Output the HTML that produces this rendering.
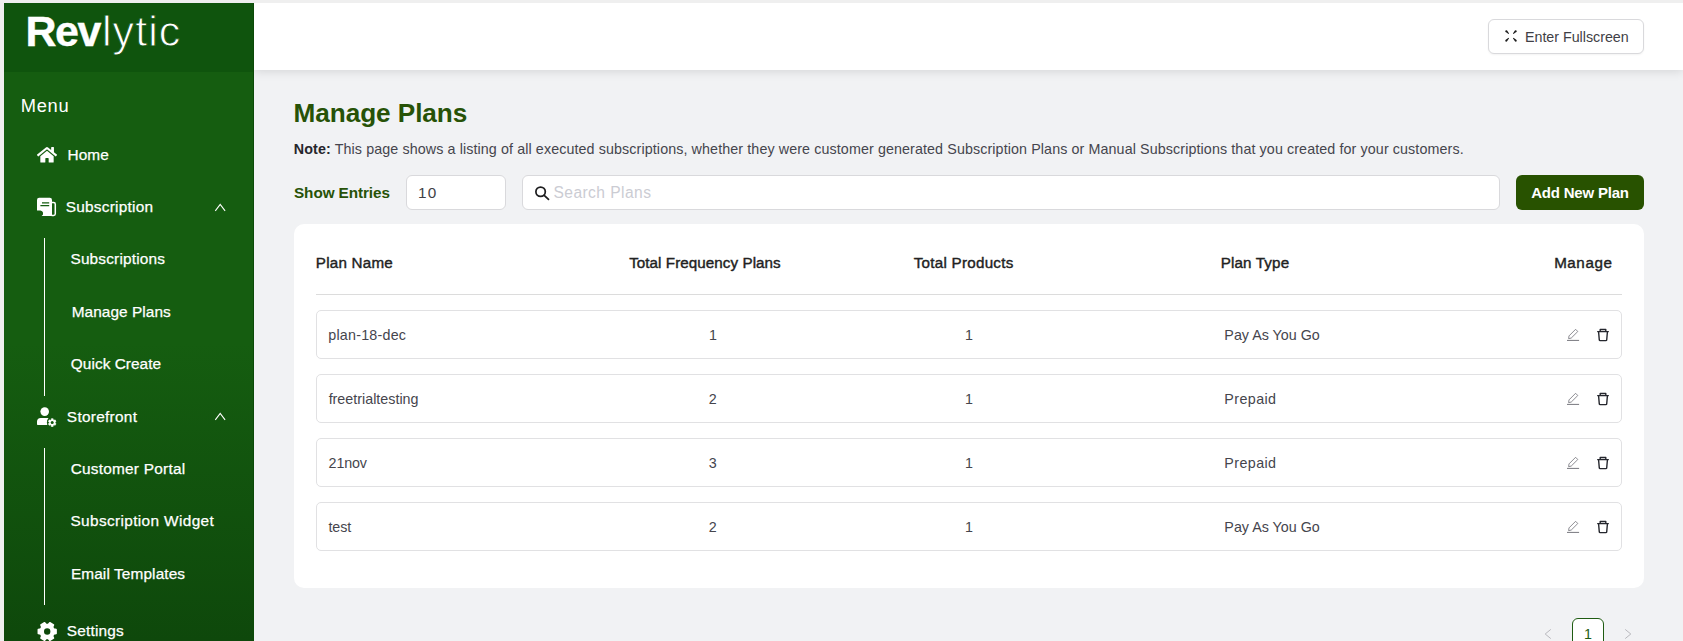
<!DOCTYPE html>
<html lang="en">
<head>
<meta charset="utf-8">
<title>Manage Plans</title>
<style>
*{box-sizing:border-box;margin:0;padding:0}
html,body{width:1683px;height:641px;overflow:hidden;background:#f1f2f4;font-family:"Liberation Sans",sans-serif;color:#333}
.abs{position:absolute}
.t{position:absolute;white-space:nowrap;line-height:1.2}
.t b{font-weight:700;color:#26262c}
#frameTop{left:0;top:0;width:1683px;height:3px;background:#efefef}
#frameLeft{left:0;top:0;width:4px;height:641px;background:#efefef}
#sidebar{left:4px;top:3px;width:250px;height:638px;background:linear-gradient(180deg,#155d10 0px,#155d10 340px,#0e480b 638px);border-right:1px solid #0b4a08}
#logo{left:4px;top:3px;width:250px;height:68.5px;background:#0f540d;border-right:1px solid #0b4a08}
.vline{position:absolute;width:1px;background:#fff;left:44px}
#header{left:254px;top:3px;width:1429px;height:67px;background:#fff;box-shadow:0 1px 10px rgba(0,0,0,.13)}
#fs{left:1488px;top:19px;width:156px;height:35px;border:1px solid #d9d9dc;border-radius:6px;background:#fff;box-shadow:0 1px 2px rgba(0,0,0,.05)}
.inp{position:absolute;top:175px;height:35px;background:#fff;border:1px solid #d9d9dc;border-radius:6px}
#add{left:1516px;top:175px;width:128px;height:35px;background:#285200;border-radius:6px}
#card{left:294px;top:224px;width:1350px;height:364px;background:#fff;border-radius:10px}
#div{left:316px;top:294px;width:1306px;height:1px;background:#dcdcdc}
.row{position:absolute;left:316px;width:1306px;height:49px;border:1px solid #e1e1e3;border-radius:5px;background:#fff}
#pg{left:1572px;top:617.5px;width:32px;height:32px;border:1px solid #1f5c12;border-radius:6px;background:#fff}
</style>
</head>
<body>
<div class="abs" id="header"></div>
<div class="abs" id="frameTop"></div>
<div class="abs" id="frameLeft"></div>
<div class="abs" id="fs"></div>
<div class="abs" id="sidebar"></div>
<div class="abs" id="logo"></div>
<div class="vline" style="top:238px;height:158px"></div>
<div class="vline" style="top:448px;height:157px"></div>
<div class="inp" style="left:406px;width:100px"></div>
<div class="inp" style="left:522px;width:978px"></div>
<div class="abs" id="add"></div>
<div class="abs" id="card"></div>
<div class="abs" id="div"></div>
<div class="row" style="top:310px"></div>
<div class="row" style="top:374px"></div>
<div class="row" style="top:438px"></div>
<div class="row" style="top:502px"></div>
<div class="abs" id="pg"></div>
<svg class="abs" style="left:0;top:0" width="1683" height="641" viewBox="0 0 1683 641">
<g transform="translate(37,145.89) scale(0.03472)" fill="#fff"><path d="M280.37 148.26L96 300.11V464a16 16 0 0 0 16 16l112.06-.29a16 16 0 0 0 15.92-16V368a16 16 0 0 1 16-16h64a16 16 0 0 1 16 16v95.64a16 16 0 0 0 16 16.05L464 480a16 16 0 0 0 16-16V300L295.67 148.26a12.19 12.19 0 0 0-15.3 0zM571.6 251.47L488 182.56V44.05a12 12 0 0 0-12-12h-56a12 12 0 0 0-12 12v72.61L318.47 43a48 48 0 0 0-61 0L4.34 251.47a12 12 0 0 0-1.6 16.9l25.5 31A12 12 0 0 0 45.15 301l235.22-193.74a12.19 12.19 0 0 1 15.3 0L530.9 301a12 12 0 0 0 16.9-1.6l25.5-31a12 12 0 0 0-1.7-16.93z"/></g>
<path fill="#fff" d="M39.2 197.8h10.6a2.2 2.2 0 0 1 2.2 2.2v16.1h-10.4a3 3 0 0 0 -1.2 -5.6h-3.4v-10.5a2.2 2.2 0 0 1 2.2 -2.2z"/>
<path stroke="#155d10" stroke-width="1.2" d="M42 202.8h7.2M40.4 205.6h8.8" fill="none"/>
<path fill="none" stroke="#fff" stroke-width="1.5" d="M52 202.6h1.6a1.7 1.7 0 0 1 1.7 1.7v9.4a1.7 1.7 0 0 1 -1.7 1.7h-2"/>
<path fill="none" stroke="#fff" stroke-width="1.1" d="M215.3 210.9L220.2 204.5L225.1 210.9"/>
<path fill="none" stroke="#fff" stroke-width="1.1" d="M215.3 419.9L220.2 413.5L225.1 419.9"/>
<circle cx="44.7" cy="411.6" r="4.3" fill="#fff"/>
<path fill="#fff" d="M40.8 417.9h7.8a4.9 4.9 0 0 0 -1.3 4.7a4.9 4.9 0 0 0 0.6 2.4h-10.1a0.8 0.8 0 0 1 -0.8 -0.8v-2.5a3.8 3.8 0 0 1 3.8 -3.8z"/>
<circle cx="52.2" cy="422.6" r="5.3" fill="#13580f"/>
<path fill="#fff" stroke="#fff" stroke-width="0.6" stroke-linejoin="round" d="M53.22 425.31 L53.11 426.49 L51.29 426.49 L51.18 425.31 L50.36 424.84 L49.28 425.34 L48.37 423.76 L49.34 423.07 L49.34 422.13 L48.37 421.44 L49.28 419.86 L50.36 420.36 L51.18 419.89 L51.29 418.71 L53.11 418.71 L53.22 419.89 L54.04 420.36 L55.12 419.86 L56.03 421.44 L55.06 422.13 L55.06 423.07 L56.03 423.76 L55.12 425.34 L54.04 424.84Z"/>
<circle cx="52.2" cy="422.6" r="1.5" fill="#13580f"/>
<path fill="#fff" stroke="#fff" stroke-width="1.6" stroke-linejoin="round" d="M53.75 629.03 L56.06 629.42 L56.06 633.58 L53.75 633.97 L52.61 635.94 L53.43 638.13 L49.83 640.21 L48.34 638.41 L46.06 638.41 L44.57 640.21 L40.97 638.13 L41.79 635.94 L40.65 633.97 L38.34 633.58 L38.34 629.42 L40.65 629.03 L41.79 627.06 L40.97 624.87 L44.57 622.79 L46.06 624.59 L48.34 624.59 L49.83 622.79 L53.43 624.87 L52.61 627.06Z"/>
<circle cx="47.2" cy="631.5" r="3.2" fill="#0e490c"/>
<path transform="translate(1511.0,35.9) rotate(45)" fill="#1b1b1b" d="M3.1 -0.38L6.0 -0.95A1.1 1.1 0 1 1 6.0 0.95L3.1 0.38Z"/>
<path transform="translate(1511.0,35.9) rotate(135)" fill="#1b1b1b" d="M3.1 -0.38L6.0 -0.95A1.1 1.1 0 1 1 6.0 0.95L3.1 0.38Z"/>
<path transform="translate(1511.0,35.9) rotate(225)" fill="#1b1b1b" d="M3.1 -0.38L6.0 -0.95A1.1 1.1 0 1 1 6.0 0.95L3.1 0.38Z"/>
<path transform="translate(1511.0,35.9) rotate(315)" fill="#1b1b1b" d="M3.1 -0.38L6.0 -0.95A1.1 1.1 0 1 1 6.0 0.95L3.1 0.38Z"/>
<circle cx="540.6" cy="191.7" r="4.7" fill="none" stroke="#1d1d1f" stroke-width="1.75"/>
<path d="M544.2 195.3L548.5 199.4" stroke="#1d1d1f" stroke-width="1.75" stroke-linecap="round"/>
<g transform="translate(0,0)" fill="none" stroke="#77777e" stroke-width="0.85" stroke-linejoin="round"><path d="M1575.6 329.3l2.2 2.2l-6.6 6.6l-2.6 0.5l0.4 -2.7z"/><path d="M1567 340.4h12.1" stroke-width="1"/></g>
<g transform="translate(0,0)" fill="none" stroke="#25272e" stroke-width="1.4" stroke-linejoin="round" stroke-linecap="round"><path d="M1597.7 331.6h10.6"/><path d="M1600.2 331.4v-1.9h5.6v1.9"/><path d="M1598.6 332l0.7 8a0.8 0.8 0 0 0 0.8 0.6h5.8a0.8 0.8 0 0 0 0.8 -0.6l0.7 -8"/></g>
<g transform="translate(0,64)" fill="none" stroke="#77777e" stroke-width="0.85" stroke-linejoin="round"><path d="M1575.6 329.3l2.2 2.2l-6.6 6.6l-2.6 0.5l0.4 -2.7z"/><path d="M1567 340.4h12.1" stroke-width="1"/></g>
<g transform="translate(0,64)" fill="none" stroke="#25272e" stroke-width="1.4" stroke-linejoin="round" stroke-linecap="round"><path d="M1597.7 331.6h10.6"/><path d="M1600.2 331.4v-1.9h5.6v1.9"/><path d="M1598.6 332l0.7 8a0.8 0.8 0 0 0 0.8 0.6h5.8a0.8 0.8 0 0 0 0.8 -0.6l0.7 -8"/></g>
<g transform="translate(0,128)" fill="none" stroke="#77777e" stroke-width="0.85" stroke-linejoin="round"><path d="M1575.6 329.3l2.2 2.2l-6.6 6.6l-2.6 0.5l0.4 -2.7z"/><path d="M1567 340.4h12.1" stroke-width="1"/></g>
<g transform="translate(0,128)" fill="none" stroke="#25272e" stroke-width="1.4" stroke-linejoin="round" stroke-linecap="round"><path d="M1597.7 331.6h10.6"/><path d="M1600.2 331.4v-1.9h5.6v1.9"/><path d="M1598.6 332l0.7 8a0.8 0.8 0 0 0 0.8 0.6h5.8a0.8 0.8 0 0 0 0.8 -0.6l0.7 -8"/></g>
<g transform="translate(0,192)" fill="none" stroke="#77777e" stroke-width="0.85" stroke-linejoin="round"><path d="M1575.6 329.3l2.2 2.2l-6.6 6.6l-2.6 0.5l0.4 -2.7z"/><path d="M1567 340.4h12.1" stroke-width="1"/></g>
<g transform="translate(0,192)" fill="none" stroke="#25272e" stroke-width="1.4" stroke-linejoin="round" stroke-linecap="round"><path d="M1597.7 331.6h10.6"/><path d="M1600.2 331.4v-1.9h5.6v1.9"/><path d="M1598.6 332l0.7 8a0.8 0.8 0 0 0 0.8 0.6h5.8a0.8 0.8 0 0 0 0.8 -0.6l0.7 -8"/></g>
<path fill="none" stroke="#b9b9be" stroke-width="1" d="M1550.8 629.4L1545.2 634L1550.8 638.6"/>
<path fill="none" stroke="#b9b9be" stroke-width="1" d="M1625.2 629.4L1630.8 634L1625.2 638.6"/>
</svg>
<div class="t" id="t_rev" style="left:25.42px;top:5.90px;font-size:43.0px;font-weight:700;color:#fff;letter-spacing:-1.450px;-webkit-text-stroke:0.4px #fff;">Rev</div>
<div class="t" id="t_lytic" style="left:101.95px;top:5.90px;font-size:43.0px;font-weight:400;color:#fff;letter-spacing:1.077px;-webkit-text-stroke:0.9px #0f540d;">lytic</div>
<div class="t" id="t_menu" style="left:20.80px;top:94.71px;font-size:18.3px;font-weight:400;color:#fff;letter-spacing:0.676px;">Menu</div>
<div class="t" id="t_home" style="left:67.51px;top:145.91px;font-size:15.4px;font-weight:400;color:#fff;letter-spacing:0.091px;-webkit-text-stroke:0.25px #fff;">Home</div>
<div class="t" id="t_sub" style="left:65.66px;top:197.81px;font-size:15.4px;font-weight:400;color:#fff;letter-spacing:0.257px;-webkit-text-stroke:0.25px #fff;">Subscription</div>
<div class="t" id="t_subs" style="left:70.45px;top:250.11px;font-size:15.4px;font-weight:400;color:#fff;letter-spacing:0.178px;-webkit-text-stroke:0.25px #fff;">Subscriptions</div>
<div class="t" id="t_mp" style="left:71.72px;top:302.91px;font-size:15.4px;font-weight:400;color:#fff;letter-spacing:0.061px;-webkit-text-stroke:0.25px #fff;">Manage Plans</div>
<div class="t" id="t_qc" style="left:70.82px;top:355.01px;font-size:15.4px;font-weight:400;color:#fff;letter-spacing:0.043px;-webkit-text-stroke:0.25px #fff;">Quick Create</div>
<div class="t" id="t_sf" style="left:66.86px;top:407.81px;font-size:15.4px;font-weight:400;color:#fff;letter-spacing:0.276px;-webkit-text-stroke:0.25px #fff;">Storefront</div>
<div class="t" id="t_cp" style="left:70.65px;top:459.91px;font-size:15.4px;font-weight:400;color:#fff;letter-spacing:0.234px;-webkit-text-stroke:0.25px #fff;">Customer Portal</div>
<div class="t" id="t_sw" style="left:70.45px;top:512.11px;font-size:15.4px;font-weight:400;color:#fff;letter-spacing:0.358px;-webkit-text-stroke:0.25px #fff;">Subscription Widget</div>
<div class="t" id="t_et" style="left:70.90px;top:564.81px;font-size:15.4px;font-weight:400;color:#fff;letter-spacing:0.110px;-webkit-text-stroke:0.25px #fff;">Email Templates</div>
<div class="t" id="t_set" style="left:66.86px;top:621.91px;font-size:15.4px;font-weight:400;color:#fff;letter-spacing:0.192px;-webkit-text-stroke:0.25px #fff;">Settings</div>
<div class="t" id="t_fs" style="left:1524.98px;top:28.71px;font-size:14.3px;font-weight:400;color:#3f3f46;letter-spacing:-0.025px;">Enter Fullscreen</div>
<div class="t" id="t_title" style="left:293.60px;top:98.00px;font-size:26.2px;font-weight:700;color:#275207;letter-spacing:-0.088px;">Manage Plans</div>
<div class="t" id="t_note" style="left:293.83px;top:140.90px;font-size:14.3px;font-weight:400;color:#45454d;letter-spacing:0.100px;"><b>Note:</b> This page shows a listing of all executed subscriptions, whether they were customer generated Subscription Plans or Manual Subscriptions that you created for your customers.</div>
<div class="t" id="t_show" style="left:294.00px;top:183.90px;font-size:15.3px;font-weight:700;color:#275207;letter-spacing:-0.085px;">Show Entries</div>
<div class="t" id="t_10" style="left:418.12px;top:183.90px;font-size:15.3px;font-weight:400;color:#3f3f46;letter-spacing:1.127px;">10</div>
<div class="t" id="t_search" style="left:553.48px;top:183.91px;font-size:15.6px;font-weight:400;color:#cbccd3;letter-spacing:0.429px;">Search Plans</div>
<div class="t" id="t_add" style="left:1531.23px;top:184.00px;font-size:15.0px;font-weight:700;color:#fff;letter-spacing:-0.201px;">Add New Plan</div>
<div class="t" id="t_h1" style="left:315.87px;top:253.80px;font-size:15.2px;font-weight:400;color:#222;letter-spacing:0.218px;-webkit-text-stroke:0.4px #222;">Plan Name</div>
<div class="t" id="t_h2" style="left:629.13px;top:253.80px;font-size:15.2px;font-weight:400;color:#222;letter-spacing:0.066px;-webkit-text-stroke:0.4px #222;">Total Frequency Plans</div>
<div class="t" id="t_h3" style="left:913.79px;top:253.80px;font-size:15.2px;font-weight:400;color:#222;letter-spacing:0.247px;-webkit-text-stroke:0.4px #222;">Total Products</div>
<div class="t" id="t_h4" style="left:1220.73px;top:253.80px;font-size:15.2px;font-weight:400;color:#222;letter-spacing:0.140px;-webkit-text-stroke:0.4px #222;">Plan Type</div>
<div class="t" id="t_h5" style="left:1554.14px;top:253.80px;font-size:15.2px;font-weight:400;color:#222;letter-spacing:0.575px;-webkit-text-stroke:0.4px #222;">Manage</div>
<div class="t" id="t_pg" style="left:1583.97px;top:626.00px;font-size:14.3px;font-weight:400;color:#1f5c12;letter-spacing:0.000px;">1</div>
<div class="t" id="r0n" style="left:328.31px;top:327.01px;font-size:14.3px;font-weight:400;color:#45454d;letter-spacing:0.222px;">plan-18-dec</div>
<div class="t" id="r0f" style="left:708.91px;top:327.01px;font-size:14.3px;font-weight:400;color:#45454d;letter-spacing:0.000px;">1</div>
<div class="t" id="r0p" style="left:964.91px;top:327.01px;font-size:14.3px;font-weight:400;color:#45454d;letter-spacing:0.000px;">1</div>
<div class="t" id="r0t" style="left:1224.37px;top:327.01px;font-size:14.3px;font-weight:400;color:#45454d;letter-spacing:0.002px;">Pay As You Go</div>
<div class="t" id="r1n" style="left:328.63px;top:391.01px;font-size:14.3px;font-weight:400;color:#45454d;letter-spacing:0.007px;">freetrialtesting</div>
<div class="t" id="r1f" style="left:708.80px;top:391.01px;font-size:14.3px;font-weight:400;color:#45454d;letter-spacing:0.000px;">2</div>
<div class="t" id="r1p" style="left:964.91px;top:391.01px;font-size:14.3px;font-weight:400;color:#45454d;letter-spacing:0.000px;">1</div>
<div class="t" id="r1t" style="left:1224.37px;top:391.01px;font-size:14.3px;font-weight:400;color:#45454d;letter-spacing:0.402px;">Prepaid</div>
<div class="t" id="r2n" style="left:328.59px;top:455.01px;font-size:14.3px;font-weight:400;color:#45454d;letter-spacing:-0.138px;">21nov</div>
<div class="t" id="r2f" style="left:708.79px;top:455.01px;font-size:14.3px;font-weight:400;color:#45454d;letter-spacing:0.000px;">3</div>
<div class="t" id="r2p" style="left:964.91px;top:455.01px;font-size:14.3px;font-weight:400;color:#45454d;letter-spacing:0.000px;">1</div>
<div class="t" id="r2t" style="left:1224.37px;top:455.01px;font-size:14.3px;font-weight:400;color:#45454d;letter-spacing:0.402px;">Prepaid</div>
<div class="t" id="r3n" style="left:328.53px;top:519.00px;font-size:14.3px;font-weight:400;color:#45454d;letter-spacing:-0.119px;">test</div>
<div class="t" id="r3f" style="left:708.80px;top:519.00px;font-size:14.3px;font-weight:400;color:#45454d;letter-spacing:0.000px;">2</div>
<div class="t" id="r3p" style="left:964.91px;top:519.00px;font-size:14.3px;font-weight:400;color:#45454d;letter-spacing:0.000px;">1</div>
<div class="t" id="r3t" style="left:1224.37px;top:519.00px;font-size:14.3px;font-weight:400;color:#45454d;letter-spacing:0.002px;">Pay As You Go</div>
</body>
</html>
